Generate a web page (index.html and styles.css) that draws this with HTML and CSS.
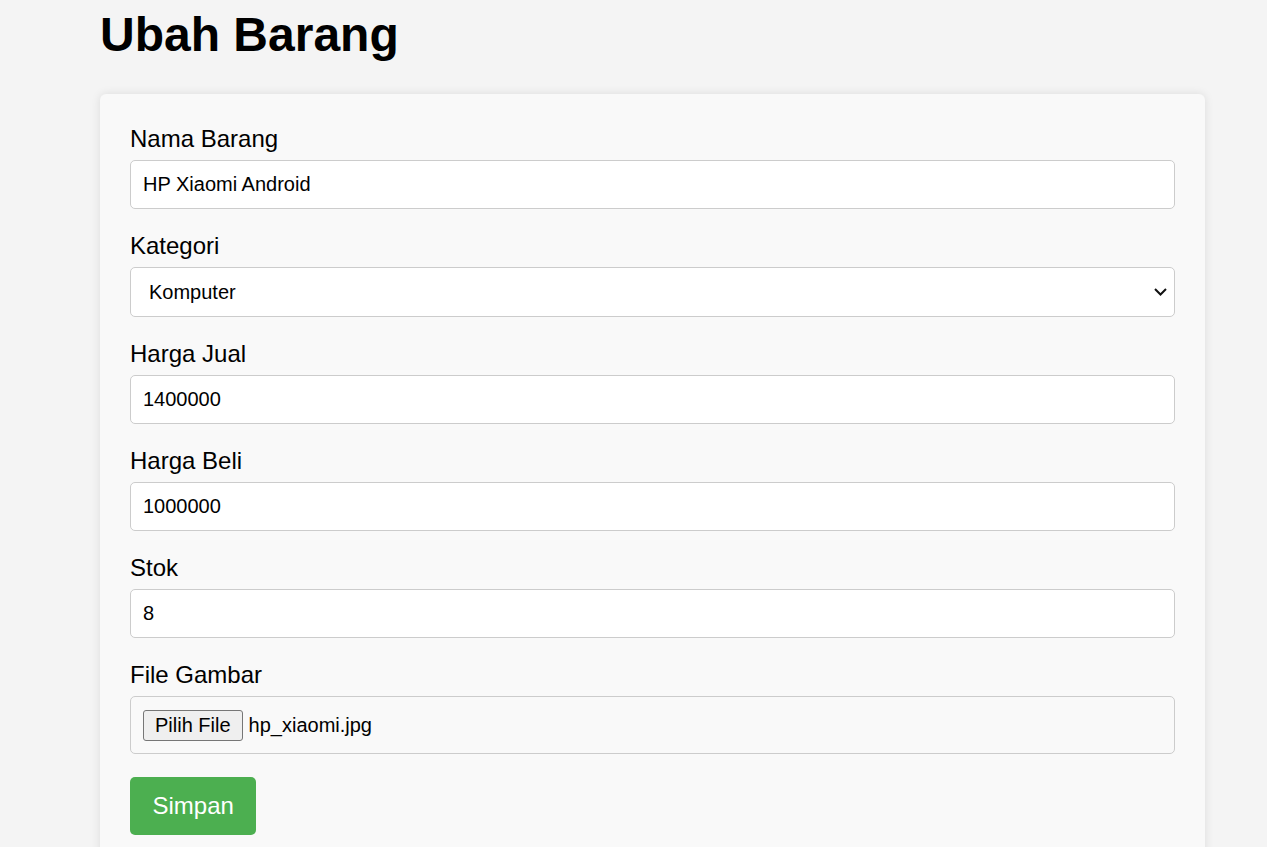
FILE: index.html
```html
<!DOCTYPE html>
<html lang="id">
<head>
<meta charset="utf-8">
<title>Ubah Barang</title>
<link rel="stylesheet" href="styles.css">
</head>
<body>
<div class="page">
  <h1 class="title">Ubah Barang</h1>
  <form class="card">
    <div class="group">
      <label class="label" for="nama">Nama Barang</label>
      <input class="field" id="nama" type="text" value="HP Xiaomi Android">
    </div>
    <div class="group">
      <label class="label" for="kategori">Kategori</label>
      <div class="select-wrap">
        <select class="field select" id="kategori">
          <option selected>Komputer</option>
          <option>Handphone</option>
        </select>
        <svg class="chevron" width="13" height="8" viewBox="0 0 13 8" aria-hidden="true">
          <path d="M1 1 L6.5 6.5 L12 1" fill="none" stroke="#111" stroke-width="2"/>
        </svg>
      </div>
    </div>
    <div class="group">
      <label class="label" for="jual">Harga Jual</label>
      <input class="field" id="jual" type="text" value="1400000">
    </div>
    <div class="group">
      <label class="label" for="beli">Harga Beli</label>
      <input class="field" id="beli" type="text" value="1000000">
    </div>
    <div class="group">
      <label class="label" for="stok">Stok</label>
      <input class="field" id="stok" type="text" value="8">
    </div>
    <div class="group">
      <span class="label">File Gambar</span>
      <div class="file-field">
        <button type="button" class="file-btn">Pilih File</button>
        <span class="file-name">hp_xiaomi.jpg</span>
      </div>
    </div>
    <button type="button" class="submit">Simpan</button>
  </form>
</div>
</body>
</html>
```

FILE: styles.css
```css
html, body {
  margin: 0;
  padding: 0;
}
body {
  background: #f4f4f4;
  font-family: "Liberation Sans", Arial, sans-serif;
  color: #000;
  overflow: hidden;
}
.page {
  width: 1105px;
  margin-left: 100px;
}
.title {
  font-size: 48px;
  font-weight: bold;
  line-height: 55px;
  margin: 7px 0 32px 0;
}
.card {
  background: #f9f9f9;
  border-radius: 6px;
  box-shadow: 0 0 10px rgba(0, 0, 0, 0.1);
  padding: 31px 30px 40px 30px;
  height: 800px;
  box-sizing: border-box;
}
.group {
  margin-bottom: 23px;
}
.label {
  display: block;
  font-size: 24px;
  line-height: 28px;
  margin-bottom: 7px;
}
.field {
  display: block;
  width: 100%;
  box-sizing: border-box;
  height: 49px;
  padding: 0 12px;
  border: 1px solid #cccccc;
  border-radius: 5px;
  background: #ffffff;
  font-family: "Liberation Sans", Arial, sans-serif;
  font-size: 20px;
  color: #000;
  outline: none;
}
.select-wrap {
  position: relative;
}
.select {
  -webkit-appearance: none;
  appearance: none;
  height: 50px;
  padding: 0 30px 0 18px;
}
.chevron {
  position: absolute;
  right: 8px;
  top: 21px;
  pointer-events: none;
}
.file-field {
  box-sizing: border-box;
  height: 58px;
  border: 1px solid #cccccc;
  border-radius: 5px;
  padding: 0 12px;
  display: flex;
  align-items: center;
  gap: 6px;
  font-size: 20px;
}
.file-btn {
  font-family: "Liberation Sans", Arial, sans-serif;
  font-size: 20px;
  color: #000;
  background: #efefef;
  border: 1px solid #767676;
  border-radius: 3px;
  height: 31px;
  padding: 0 11px;
  line-height: 27px;
}
.file-name {
  line-height: 23px;
}
.submit {
  font-family: "Liberation Sans", Arial, sans-serif;
  font-size: 24px;
  line-height: 28px;
  color: #ffffff;
  background: #4caf50;
  border: none;
  border-radius: 5px;
  padding: 15px 22.5px;
  margin-top: 0;
}
```
